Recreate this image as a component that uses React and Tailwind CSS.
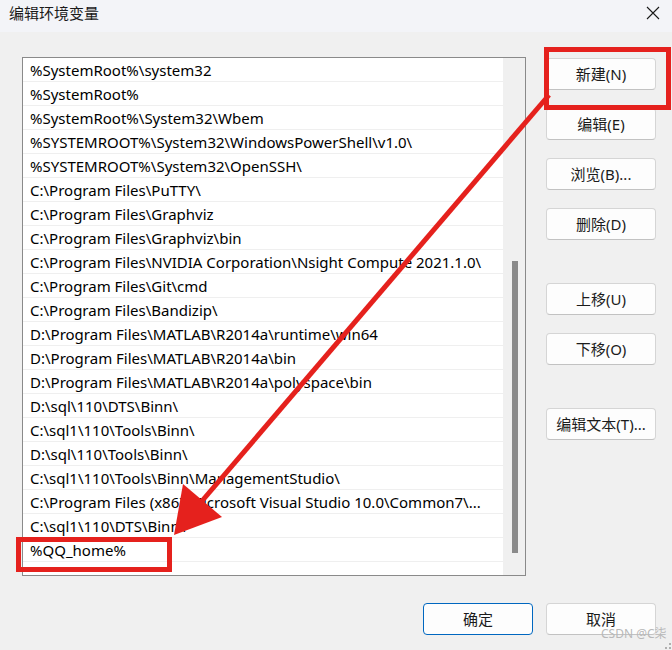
import React from "react";

const rows = [
  "%SystemRoot%\\system32",
  "%SystemRoot%",
  "%SystemRoot%\\System32\\Wbem",
  "%SYSTEMROOT%\\System32\\WindowsPowerShell\\v1.0\\",
  "%SYSTEMROOT%\\System32\\OpenSSH\\",
  "C:\\Program Files\\PuTTY\\",
  "C:\\Program Files\\Graphviz",
  "C:\\Program Files\\Graphviz\\bin",
  "C:\\Program Files\\NVIDIA Corporation\\Nsight Compute 2021.1.0\\",
  "C:\\Program Files\\Git\\cmd",
  "C:\\Program Files\\Bandizip\\",
  "D:\\Program Files\\MATLAB\\R2014a\\runtime\\win64",
  "D:\\Program Files\\MATLAB\\R2014a\\bin",
  "D:\\Program Files\\MATLAB\\R2014a\\polyspace\\bin",
  "D:\\sql\\110\\DTS\\Binn\\",
  "C:\\sql1\\110\\Tools\\Binn\\",
  "D:\\sql\\110\\Tools\\Binn\\",
  "C:\\sql1\\110\\Tools\\Binn\\ManagementStudio\\",
  "C:\\Program Files (x86)\\Microsoft Visual Studio 10.0\\Common7\\...",
  "C:\\sql1\\110\\DTS\\Binn\\",
  "%QQ_home%",
];

const font = { fontFamily: '"Noto Sans", "Noto Sans CJK SC", sans-serif' };

function Btn({ children, primary }) {
  return (
    <div
      className={
        "w-[110px] h-[32px] rounded-[4px] bg-[#fdfdfd] flex items-center justify-center text-[15px] text-[#1b1b1b] " +
        (primary
          ? "border border-[#0067c0]"
          : "border border-[#d5d5d5] border-b-[#c2c2c2]")
      }
    >
      {children}
    </div>
  );
}

export default function App() {
  return (
    <div
      className="relative w-[672px] h-[650px] overflow-hidden bg-[#f0f0f0] flex flex-col"
      style={font}
    >
      {/* Title bar */}
      <div className="h-[32px] bg-[#f3f4f8] flex items-start justify-between pl-[9px] pr-[12px] pt-[6px]">
        <span className="text-[15px] text-[#1a1a1a] leading-none">编辑环境变量</span>
        <svg width="14" height="14" viewBox="0 0 14 14" className="mt-[0px]">
          <path d="M1 1 L13 13 M13 1 L1 13" stroke="#1a1a1a" strokeWidth="1.1" fill="none" />
        </svg>
      </div>

      {/* Body */}
      <div className="flex pl-[22px] pt-[25px]">
        {/* List box */}
        <div className="w-[504px] h-[519px] border border-[#8a8a8a] bg-white flex">
          <div className="flex-1 flex flex-col">
            {rows.map((r, i) => (
              <div
                key={i}
                className="h-[24px] border-b border-[#efefef] flex items-center pl-[7px] pt-[2px] text-[15px] text-[#000] whitespace-nowrap overflow-hidden"
              >
                {r}
              </div>
            ))}
          </div>
          <div className="w-[22px] bg-[#f0f0f0] flex justify-center pt-[203px]">
            <div className="w-[6px] h-[292px] bg-[#8a8a8a] ml-[2px]" />
          </div>
        </div>

        {/* Right buttons */}
        <div className="ml-[20px] pt-[1px] flex flex-col">
          <div className="flex flex-col gap-[18px]">
            <Btn>新建(N)</Btn>
            <Btn>编辑(E)</Btn>
            <Btn>浏览(B)...</Btn>
            <Btn>删除(D)</Btn>
          </div>
          <div className="flex flex-col gap-[18px] mt-[43px]">
            <Btn>上移(U)</Btn>
            <Btn>下移(O)</Btn>
          </div>
          <div className="mt-[43px]">
            <Btn>编辑文本(T)...</Btn>
          </div>
        </div>
      </div>

      {/* Bottom buttons */}
      <div className="flex justify-end gap-[13px] pr-[16px] mt-[27px]">
        <Btn primary>确定</Btn>
        <Btn>取消</Btn>
      </div>

      {/* Watermark */}
      <div className="absolute left-[601px] top-[628px] text-[12px] text-[#b8b8b8] leading-none">
        CSDN @C柒
      </div>
      {/* Resize grip */}
      <svg className="absolute right-0 bottom-0" width="8" height="8" viewBox="0 0 8 8">
        <rect x="5" y="1" width="2" height="2" fill="#b0b0b0" />
        <rect x="1" y="5" width="2" height="2" fill="#b0b0b0" />
        <rect x="5" y="5" width="2" height="2" fill="#b0b0b0" />
      </svg>

      {/* Red annotations */}
      <svg className="absolute inset-0 pointer-events-none" width="672" height="650" viewBox="0 0 672 650">
        <rect x="546.5" y="49.5" width="122" height="58" fill="none" stroke="#e5211d" strokeWidth="5" />
        <rect x="18.5" y="539.5" width="151" height="30" fill="none" stroke="#e5211d" strokeWidth="5" />
        <line x1="549" y1="95" x2="196" y2="508" stroke="#e5211d" strokeWidth="5" />
        <polygon points="174,535 183,484 222,517" fill="#e5211d" />
      </svg>
    </div>
  );
}
